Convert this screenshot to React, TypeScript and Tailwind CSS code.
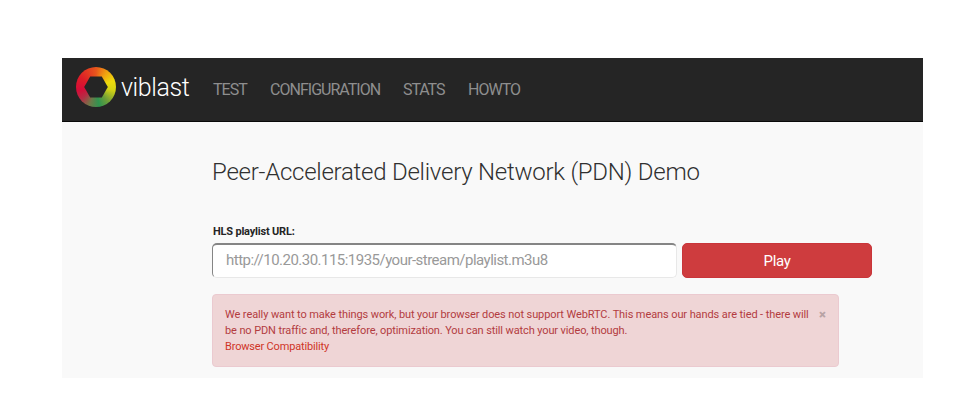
const navItems = [
  { label: "TEST", cls: "w-[57px] tracking-[-1px]" },
  { label: "CONFIGURATION", cls: "w-[133px] tracking-[-0.98px]" },
  { label: "STATS", cls: "w-[65px] tracking-[-1.1px]" },
  { label: "HOWTO", cls: "w-[60px] tracking-[-1px]" },
];

function Logo() {
  return (
    <div className="flex w-[151px] items-center pl-[14px]">
      <div className="mb-px flex size-10 shrink-0 items-center justify-center rounded-full bg-[conic-gradient(from_0deg,#e8561c_0deg,#f0a010_35deg,#eedb0c_70deg,#d5d313_100deg,#6f9e38_140deg,#2f9450_170deg,#6e7848_200deg,#b52d45_230deg,#d50c38_260deg,#dd1c28_300deg,#e8561c_360deg)]">
        <svg width="24" height="22" viewBox="0 0 24 22">
          <path d="M6.2 0.5H17.8L23.8 11L17.8 21.5H6.2L0.2 11Z" fill="#252525" />
        </svg>
      </div>
      <span className="mt-px ml-[5px] text-[25px] leading-[30px] font-light tracking-[-0.4px] whitespace-nowrap text-white">viblast</span>
    </div>
  );
}

export default function App() {
  return (
    <div className="h-[412px] w-[980px] bg-white pt-[58px] pl-[62px] font-[Roboto,sans-serif]">
      <div className="h-[320px] w-[861px] bg-[#f9f9f9]">
        <header className="flex h-[64px] border-b border-[#090909] bg-[#252525]">
          <div className="flex h-[59px] items-center">
            <Logo />
            <nav className="flex pt-[4px] text-[16px] leading-5 whitespace-nowrap text-[#8e8e8e]">
              {navItems.map((item) => (
                <a key={item.label} className={item.cls}>{item.label}</a>
              ))}
            </nav>
          </div>
        </header>
        <main className="pl-[150px]">
          <h1 className="pt-[34px] text-[24px] leading-[32px] font-light tracking-[-0.25px] whitespace-nowrap text-[#303030]">
            <span>Peer-Accelerated Delivery Network (PDN) Demo</span>
          </h1>
          <label className="mt-[36px] block pl-px text-[11px] leading-[15px] font-bold tracking-[-0.2px] text-[#252525]"><span>HLS playlist URL:</span></label>
          <div className="mt-[4px] flex gap-[5px]">
            <div className="h-[35px] w-[465px] rounded-[5px] border border-t-2 border-[#e8e8e8] border-t-[#858585] border-l-[#858585] bg-white pl-[13px] text-[15px] leading-[30px] tracking-[-0.52px] text-[#999]">
              <span>http://10.20.30.115:1935/your-stream/playlist.m3u8</span>
            </div>
            <button className="h-[35px] w-[190px] rounded-[5px] border border-[#c9353a] bg-[#ce3c3e] text-[15px] leading-[32px] tracking-[-0.3px] text-white">
              <span>Play</span>
            </button>
          </div>
          <div className="mt-[16px] flex h-[73px] w-[627px] justify-between rounded-[4px] border border-[#ebcad0] bg-[#efd5d6] pt-[12px] pr-[12px] pl-[12px] text-[11px] leading-4 whitespace-nowrap text-[#b33c3f]">
            <p>
              <span className="tracking-[-0.097px]">We really want to make things work, but your browser does not support WebRTC. This means our hands are tied - there will</span>
              <br />
              <span className="tracking-[-0.115px]">be no PDN traffic and, therefore, optimization. You can still watch your video, though.</span>
              <br />
              <a className="tracking-[-0.17px] text-[#cf3427]">Browser Compatibility</a>
            </p>
            <button className="h-4 text-[13px] leading-[14px] font-black text-[#b8a3a5]">×</button>
          </div>
        </main>
      </div>
    </div>
  );
}
